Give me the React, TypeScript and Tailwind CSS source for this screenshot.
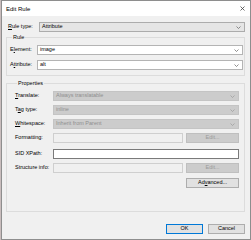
import React from 'react'

const font = { fontFamily: '"Liberation Sans", Arial, sans-serif' }

function Chevron({ dim }: { dim?: boolean }) {
  return (
    <svg width="5" height="3" viewBox="0 0 5 3" className="shrink-0">
      <path d="M0.5 0.5 L2.5 2.5 L4.5 0.5" fill="none" stroke={dim ? '#9a9a9a' : '#606060'} strokeWidth="0.7" />
    </svg>
  )
}

function Combo({ value, kind }: { value: string; kind: 'white' | 'gray' | 'disabled' }) {
  const box =
    kind === 'white'
      ? 'bg-white border-[#b4b4b4] text-black'
      : kind === 'gray'
      ? 'bg-[#e5e5e5] border-[#acacac] text-black'
      : 'bg-[#cccccc] border-[#c4c4c4] text-[#8f8f8f]'
  return (
    <div className={`flex-1 h-[10px] border flex items-center justify-between pl-[2px] pr-[3px] ${box}`}>
      <span className="leading-none">{value}</span>
      <Chevron dim={kind === 'disabled'} />
    </div>
  )
}

function Btn({ label, disabled }: { label: React.ReactNode; disabled?: boolean }) {
  const cls = disabled
    ? 'bg-[#cccccc] border-[#bfbfbf] text-[#9a9a9a]'
    : 'bg-[#e1e1e1] border-[#adadad] text-black'
  return (
    <div className={`w-[53px] h-[10px] border flex items-center justify-center leading-none ${cls}`}>{label}</div>
  )
}

function Row({ label, children, labelW, className = '' }: { label: React.ReactNode; children: React.ReactNode; labelW: string; className?: string }) {
  return (
    <div className={`flex items-center ${className}`}>
      <div className={`${labelW} shrink-0 leading-none`}>{label}</div>
      {children}
    </div>
  )
}

export default function App() {
  return (
    <div className="w-[251px] h-[240px] bg-[#c9bdbd] text-[5.5px] text-black" style={font}>
      <div className="ml-[1px] w-[250px] h-[240px] border border-[#8e8e8e] flex flex-col bg-[#f0f0f0]">
        <div className="h-[15px] bg-white flex items-center justify-between pl-[4px] pr-[5px] shrink-0">
          <span className="text-[6px] leading-none">Edit Rule</span>
          <svg width="5" height="5" viewBox="0 0 5 5">
            <path d="M0.5 0.5 L4.5 4.5 M4.5 0.5 L0.5 4.5" stroke="#444" strokeWidth="0.8" />
          </svg>
        </div>

        <div className="flex-1 flex flex-col pl-[4px] pr-[5px]">
          <Row label={<span className="pl-[2px]"><u>R</u>ule type:</span>} labelW="w-[33px]" className="mt-[6px]">
            <Combo value="Attribute" kind="gray" />
          </Row>

          <fieldset className="mt-[2px] border border-[#dcdcdc] pl-[3px] pr-[1px] pb-[5px]">
            <legend className="ml-[2px] px-[1px] leading-[7px]">Rule</legend>
            <Row label={<span>E<u>l</u>ement:</span>} labelW="w-[27px]" className="mt-[4px]">
              <Combo value="image" kind="white" />
            </Row>
            <Row label={<span>A<u>t</u>tribute:</span>} labelW="w-[27px]" className="mt-[5px]">
              <Combo value="alt" kind="white" />
            </Row>
          </fieldset>

          <fieldset className="mt-[4px] border border-[#dcdcdc] pl-[8px] pr-[5px] pb-[23px]">
            <legend className="ml-[2px] px-[1px] leading-[7px]">Properties</legend>
            <Row label={<span><u>T</u>ranslate:</span>} labelW="w-[38px]" className="mt-[4px]">
              <Combo value="Always translatable" kind="disabled" />
            </Row>
            <Row label={<span>T<u>a</u>g type:</span>} labelW="w-[38px]" className="mt-[4px]">
              <Combo value="inline" kind="disabled" />
            </Row>
            <Row label={<span><u>W</u>hitespace:</span>} labelW="w-[38px]" className="mt-[4px]">
              <Combo value="Inherit from Parent" kind="disabled" />
            </Row>
            <Row label="Formatting:" labelW="w-[38px]" className="mt-[4px]">
              <div className="flex-1 h-[10px] border border-[#cfcfcf] bg-[#f0f0f0]" />
              <div className="ml-[3px]">
                <Btn label="Edit..." disabled />
              </div>
            </Row>
            <Row label="SID XPath:" labelW="w-[38px]" className="mt-[6px]">
              <div className="flex-1 h-[10px] border border-[#7a7a7a] bg-white" />
            </Row>
            <Row label="Structure info:" labelW="w-[38px]" className="mt-[4px]">
              <div className="flex-1 h-[10px] border border-[#cfcfcf] bg-[#f0f0f0]" />
              <div className="ml-[3px]">
                <Btn label="Edit..." disabled />
              </div>
            </Row>
            <div className="flex justify-end mt-[5px]">
              <Btn label={<span>Ad<u>v</u>anced...</span>} />
            </div>
          </fieldset>

          <div className="flex justify-end gap-[5px] mt-[12px]">
            <div className="w-[37px] h-[10px] border border-[#0078d7] bg-[#e1e1e1] flex items-center justify-center leading-none">OK</div>
            <div className="w-[37px] h-[10px] border border-[#adadad] bg-[#e1e1e1] flex items-center justify-center leading-none">Cancel</div>
          </div>
        </div>
      </div>
    </div>
  )
}
